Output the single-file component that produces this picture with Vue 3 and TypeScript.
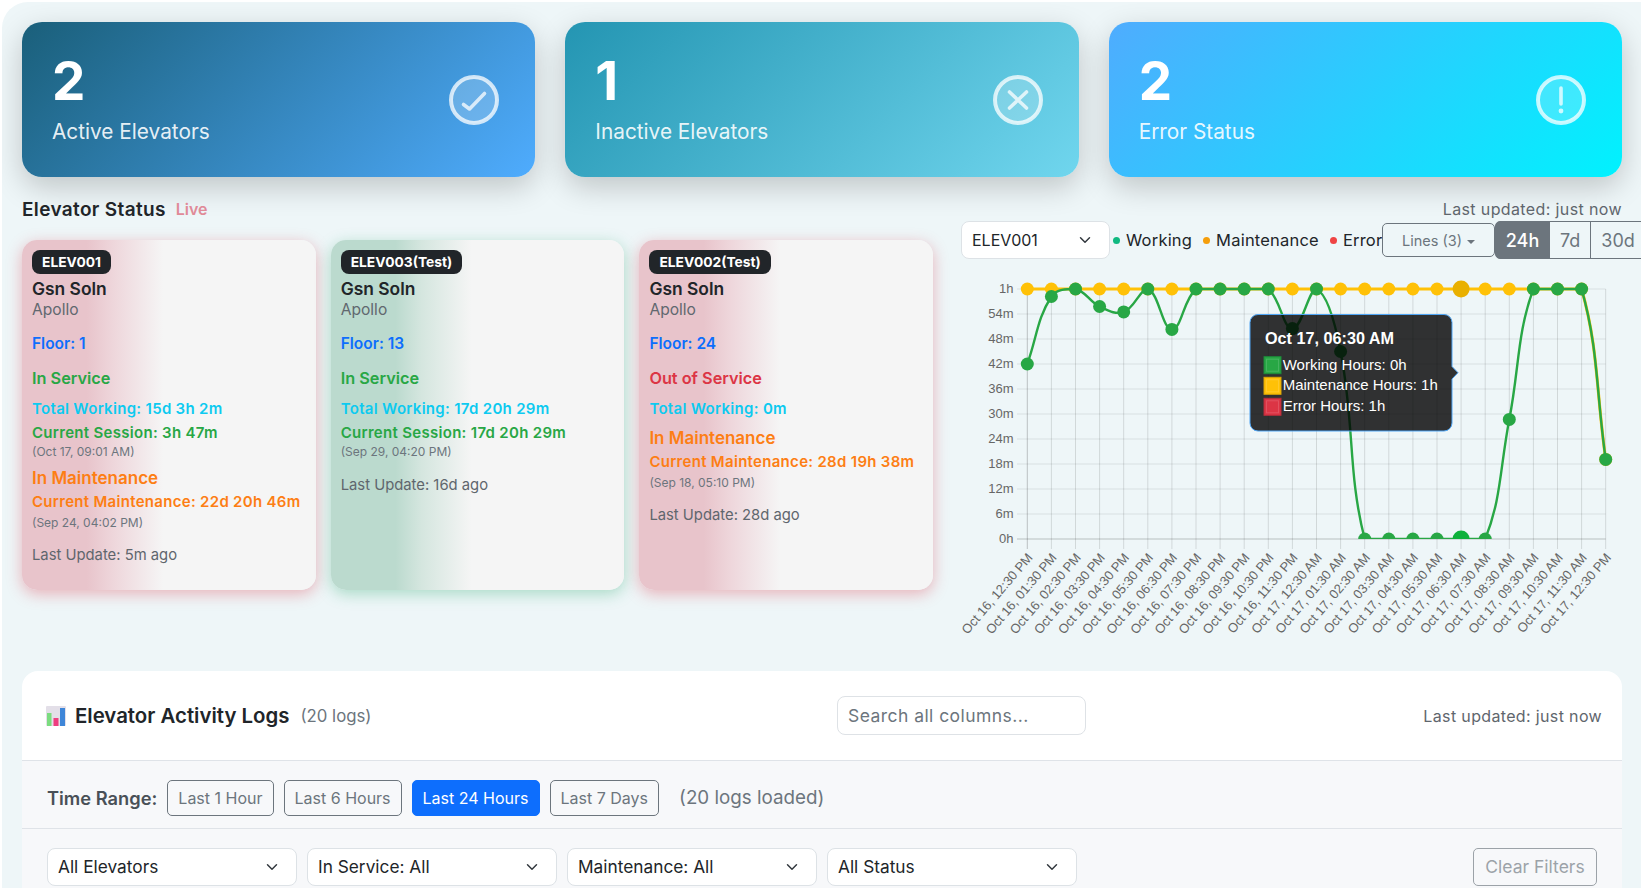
<template>
  <div class="page">
    <section class="stat-row">
      <div v-for="stat in stats" :key="stat.label" class="stat-card" :class="stat.tone">
        <div>
          <div class="stat-value">{{ stat.value }}</div>
          <div class="stat-label">{{ stat.label }}</div>
        </div>
        <svg class="stat-icon" viewBox="0 0 50 50" width="50" height="50">
          <circle cx="25" cy="25" r="23" class="ring" />
          <path v-if="stat.tone === 'active'" d="M14.5 29.5 L20.5 34 L35.5 18.5" class="glyph" />
          <path v-else-if="stat.tone === 'inactive'" d="M16.5 17 L33.5 33 M33.5 17 L16.5 33" class="glyph" />
          <template v-else>
            <path d="M25 13 L25 29" class="glyph" />
            <circle cx="25" cy="36" r="2.4" class="dot" />
          </template>
        </svg>
      </div>
    </section>

    <section class="status-row">
      <div>
        <div class="status-head">
          <h2>Elevator Status</h2>
          <span class="live">Live</span>
        </div>
        <div class="elevators">
          <article v-for="lift in lifts" :key="lift.id" class="lift" :class="lift.tone">
            <span class="badge">{{ lift.id }}</span>
            <div class="name">Gsn Soln</div>
            <div class="site">Apollo</div>
            <div class="floor">Floor: {{ lift.floor }}</div>
            <div class="service" :class="lift.inService ? 'green' : 'red'">
              {{ lift.inService ? 'In Service' : 'Out of Service' }}
            </div>
            <div class="metric total">Total Working: {{ lift.total }}</div>
            <template v-if="lift.session">
              <div class="metric session green">Current Session: {{ lift.session }}</div>
              <div class="since">({{ lift.sessionSince }})</div>
            </template>
            <template v-if="lift.maintenance">
              <div class="maint">In Maintenance</div>
              <div class="metric session orange">Current Maintenance: {{ lift.maintenance }}</div>
              <div class="since">({{ lift.maintenanceSince }})</div>
            </template>
            <div class="update">Last Update: {{ lift.update }}</div>
          </article>
        </div>
      </div>

      <div class="chart-col">
        <div class="chart-updated">Last updated: just now</div>
        <div class="chart-controls">
          <select class="form-select lift-select">
            <option>ELEV001</option>
          </select>
          <div class="legend">
            <span class="legend-item"><i class="w"></i>Working</span>
            <span class="legend-item"><i class="m"></i>Maintenance</span>
            <span class="legend-item"><i class="e"></i>Error</span>
          </div>
          <button class="lines-btn">Lines (3)<span class="caret"></span></button>
          <div class="range-group">
            <button class="on">24h</button>
            <button>7d</button>
            <button>30d</button>
          </div>
        </div>

        <svg class="chart" width="661" height="382" viewBox="0 0 661 382">
          <defs>
            <clipPath id="plot-clip">
              <rect x="0" y="0" width="661" height="277" />
            </clipPath>
          </defs>
          <line
            v-for="(x, i) in xs"
            :key="'v' + i"
            :x1="x" :x2="x" y1="27" y2="287"
            :class="i === 0 ? 'axis' : 'grid-v'"
          />
          <line
            v-for="tick in yTicks"
            :key="tick.label"
            x1="56" :x2="xs[24]" :y1="tick.y" :y2="tick.y"
            :class="tick.label === '0h' ? 'axis' : 'grid-h'"
          />
          <text v-for="tick in yTicks" :key="'t' + tick.label" x="52.5" :y="tick.y + 4" class="tick" text-anchor="end">{{ tick.label }}</text>
          <text
            v-for="(label, i) in xLabels"
            :key="label"
            class="tick"
            text-anchor="end"
            :transform="`translate(${xs[i] + 6} 296) rotate(-49.5)`"
          >{{ label }}</text>

          <g clip-path="url(#plot-clip)">
            <path :d="yellowPath" class="line yellow" />
            <circle v-for="(p, i) in yellowPts" :key="'y' + i" :cx="p.x" :cy="p.y" r="6.5" fill="#ffc107" />
            <circle :cx="xs[18]" cy="27" r="8.5" fill="#e9b000" />
            <path :d="greenPath" class="line green-line" />
            <circle v-for="(p, i) in greenPts" :key="'g' + i" :cx="p.x" :cy="p.y" r="6.5" fill="#28a745" />
            <circle :cx="xs[18]" cy="277" r="8.5" fill="#0db13b" />
          </g>

          <path
            class="tip"
            d="M297 52.5 H483 a8 8 0 0 1 8 8 V104.5 L497 110.7 L491 117 V161 a8 8 0 0 1 -8 8 H297 a8 8 0 0 1 -8 -8 V60.5 a8 8 0 0 1 8 -8 Z"
          />
          <text x="304" y="82" class="tip-title">Oct 17, 06:30 AM</text>
          <g v-for="row in tipRows" :key="row.text">
            <rect x="303" :y="row.y" width="17" height="17" :fill="row.color" :stroke="row.edge" />
            <rect x="305.5" :y="row.y + 2.5" width="12" height="12" fill="none" stroke="rgba(255,255,255,0.14)" />
            <text x="321.7" :y="row.y + 13" class="tip-text">{{ row.text }}</text>
          </g>
        </svg>
      </div>
    </section>

    <section class="logs">
      <header class="logs-head">
        <div class="logs-title">
          <svg width="20" height="20" viewBox="0 0 20 20">
            <rect width="20" height="20" rx="1" fill="#e3dfe8" />
            <rect x="1" y="7" width="4.5" height="13" fill="#7bdc7f" />
            <rect x="7.5" y="12" width="5" height="8" fill="#ee3d7f" />
            <rect x="14" y="2" width="5" height="18" fill="#3e86d8" />
          </svg>
          <h3>Elevator Activity Logs</h3>
          <span class="log-count">(20 logs)</span>
        </div>
        <input class="search" placeholder="Search all columns..." />
        <span class="logs-updated">Last updated: just now</span>
      </header>
      <div class="time-row">
        <strong>Time Range:</strong>
        <button v-for="r in ranges" :key="r" class="range-btn" :class="{ active: r === 'Last 24 Hours' }">{{ r }}</button>
        <span class="loaded">(20 logs loaded)</span>
      </div>
      <div class="filter-row">
        <select v-for="f in filters" :key="f" class="form-select filter">
          <option>{{ f }}</option>
        </select>
        <button class="clear-btn" disabled>Clear Filters</button>
      </div>
    </section>
  </div>
</template>

<script setup lang="ts">
interface Point {
  x: number
  y: number
}

const stats = [
  { value: 2, label: 'Active Elevators', tone: 'active' },
  { value: 1, label: 'Inactive Elevators', tone: 'inactive' },
  { value: 2, label: 'Error Status', tone: 'error' },
]

const lifts = [
  {
    id: 'ELEV001', floor: 1, tone: 'pink', inService: true, total: '15d 3h 2m',
    session: '3h 47m', sessionSince: 'Oct 17, 09:01 AM',
    maintenance: '22d 20h 46m', maintenanceSince: 'Sep 24, 04:02 PM', update: '5m ago',
  },
  {
    id: 'ELEV003(Test)', floor: 13, tone: 'mint', inService: true, total: '17d 20h 29m',
    session: '17d 20h 29m', sessionSince: 'Sep 29, 04:20 PM',
    maintenance: '', maintenanceSince: '', update: '16d ago',
  },
  {
    id: 'ELEV002(Test)', floor: 24, tone: 'pink', inService: false, total: '0m',
    session: '', sessionSince: '',
    maintenance: '28d 19h 38m', maintenanceSince: 'Sep 18, 05:10 PM', update: '28d ago',
  },
]

const ranges = ['Last 1 Hour', 'Last 6 Hours', 'Last 24 Hours', 'Last 7 Days']
const filters = ['All Elevators', 'In Service: All', 'Maintenance: All', 'All Status']

const top = 27
const bottom = 277
const xs = Array.from({ length: 25 }, (_, i) => 66.3 + i * 24.1)
const toY = (minutes: number) => bottom - (minutes / 60) * (bottom - top)

const yTicks = ['0h', '6m', '12m', '18m', '24m', '30m', '36m', '42m', '48m', '54m', '1h'].map((label, i) => ({
  label,
  y: toY(i * 6),
}))

const xLabels = xs.map((_, i) => {
  const h24 = (12 + i) % 24
  const h12 = h24 % 12 === 0 ? 12 : h24 % 12
  const day = i >= 12 ? 17 : 16
  return `Oct ${day}, ${String(h12).padStart(2, '0')}:30 ${h24 < 12 ? 'AM' : 'PM'}`
})

const working = [42, 58.2, 60, 55.8, 54.5, 60, 50.3, 60, 60, 60, 60, 50.5, 60, 45, 0, 0, 0, 0, 0, 0, 28.7, 60, 60, 60, 19.1]
const maintenance = working.map((_, i) => (i === 24 ? 19.1 : 60))

const greenPts: Point[] = working.map((v, i) => ({ x: xs[i], y: toY(v) }))
const yellowPts: Point[] = maintenance.map((v, i) => ({ x: xs[i], y: toY(v) }))

// same bezier chart.js draws with tension 0.4
function spline(pts: Point[], tension = 0.4): string {
  const clampY = (y: number) => Math.min(bottom, Math.max(top, y))
  const clampX = (x: number) => Math.min(xs[24], Math.max(xs[0], x))
  const ctrl = pts.map((cur, i) => {
    const prev = pts[Math.max(0, i - 1)]
    const next = pts[Math.min(pts.length - 1, i + 1)]
    const d01 = Math.hypot(cur.x - prev.x, cur.y - prev.y)
    const d12 = Math.hypot(next.x - cur.x, next.y - cur.y)
    const total = d01 + d12 || 1
    const fa = (tension * d01) / total
    const fb = (tension * d12) / total
    return {
      before: { x: clampX(cur.x - fa * (next.x - prev.x)), y: clampY(cur.y - fa * (next.y - prev.y)) },
      after: { x: clampX(cur.x + fb * (next.x - prev.x)), y: clampY(cur.y + fb * (next.y - prev.y)) },
    }
  })
  let d = `M${pts[0].x} ${pts[0].y}`
  for (let i = 1; i < pts.length; i++) {
    const a = ctrl[i - 1].after
    const b = ctrl[i].before
    d += ` C${a.x} ${a.y} ${b.x} ${b.y} ${pts[i].x} ${pts[i].y}`
  }
  return d
}

const greenPath = spline(greenPts)
const yellowPath = spline(yellowPts)

const tipRows = [
  { text: 'Working Hours: 0h', color: '#28a745', edge: '#1d8a3a', y: 94.7 },
  { text: 'Maintenance Hours: 1h', color: '#ffc107', edge: '#d9a406', y: 115.3 },
  { text: 'Error Hours: 1h', color: '#dc3545', edge: '#b52c3a', y: 136.3 },
]
</script>

<style scoped>
.page {
  box-sizing: border-box;
  margin: 2px 0 0 2px;
  width: 1639px;
  height: 886px;
  padding: 20px 19px 0 20px;
  background: #eef6f8;
  border-top-left-radius: 26px;
  overflow: hidden;
  font-family: Inter, "Open Sans", sans-serif;
  color: #212529;
}

.stat-row {
  display: grid;
  grid-template-columns: repeat(3, 1fr);
  gap: 30px;
  width: 1600px;
}

.stat-card {
  display: flex;
  align-items: center;
  justify-content: space-between;
  height: 155px;
  box-sizing: border-box;
  padding: 0 36px 0 30px;
  border-radius: 20px;
  color: #fff;
  box-shadow: 0 10px 30px rgba(0, 0, 0, 0.2);
}

.stat-card.active {
  background: linear-gradient(135deg, #1a5f7a, #4facfe);
}

.stat-card.inactive {
  background: linear-gradient(135deg, #2495b2, #70d6ee);
}

.stat-card.error {
  background: linear-gradient(135deg, #4facfe, #00f2fe);
}

.stat-value {
  padding-top: 1px;
  font-size: 53px;
  font-weight: 700;
  line-height: 56px;
}

.stat-label {
  margin-top: 8px;
  font-size: 20.8px;
  line-height: 30px;
  color: rgba(255, 255, 255, 0.9);
}

.stat-icon .ring {
  fill: rgba(255, 255, 255, 0.2);
  stroke: rgba(255, 255, 255, 0.75);
  stroke-width: 4;
}

.stat-icon .glyph {
  fill: none;
  stroke: rgba(255, 255, 255, 0.75);
  stroke-width: 3.6;
  stroke-linecap: round;
  stroke-linejoin: round;
}

.stat-icon .dot {
  fill: rgba(255, 255, 255, 0.75);
}

.status-row {
  display: grid;
  grid-template-columns: 912px 661px;
  gap: 27px;
  width: 1600px;
  margin-top: 20px;
}

.status-head {
  display: flex;
  align-items: center;
  gap: 10px;
  height: 24px;
  margin-bottom: 19px;
}

.status-head h2 {
  margin: 0;
  font-size: 19px;
  font-weight: 600;
  letter-spacing: 0.35px;
}

.live {
  font-size: 16px;
  font-weight: 600;
  color: #e08a98;
}

.elevators {
  display: flex;
  gap: 15px;
}

.lift {
  box-sizing: border-box;
  width: 293.7px;
  height: 350px;
  padding: 10px;
  border-radius: 15px;
  font-size: 15px;
  line-height: 20px;
}

.lift.pink {
  background: linear-gradient(90deg, #e8c4cb 0%, #e8c4cb 22%, #eed6db 31%, #f5f5f5 48%);
  box-shadow: 0 4px 15px rgba(220, 53, 69, 0.35);
}

.lift.mint {
  background: linear-gradient(90deg, #bbdace 0%, #bbdace 22%, #d5e6df 31%, #f5f5f5 48%);
  box-shadow: 0 4px 15px rgba(40, 167, 107, 0.35);
}

.badge {
  display: inline-block;
  height: 24px;
  padding: 0 10px;
  border-radius: 8px;
  background: #212529;
  color: #fff;
  font-size: 13.8px;
  font-weight: 700;
  line-height: 24px;
}

.name {
  margin-top: 4px;
  font-size: 17.4px;
  font-weight: 600;
  line-height: 22px;
}

.site {
  font-size: 15.6px;
  color: #61686f;
}

.floor {
  margin-top: 14px;
  font-size: 15.5px;
  font-weight: 600;
  color: #0d6efd;
}

.service {
  margin-top: 14px;
  font-size: 16.3px;
  font-weight: 600;
}

.metric {
  font-weight: 600;
  letter-spacing: 0.3px;
}

.total {
  margin-top: 11px;
  color: #0dcaf0;
}

.session {
  margin-top: 4px;
}

.green {
  color: #28a745;
}

.red {
  color: #dc3545;
}

.orange {
  color: #fd7e14;
}

.since {
  font-size: 12px;
  line-height: 18px;
  color: #6c757d;
}

.orange + .since {
  margin: 2px 0 -1px;
}

.maint {
  margin-top: 7px;
  font-size: 17px;
  font-weight: 600;
  color: #fd7e14;
}

.total + .maint {
  margin-top: 9px;
}

.update {
  margin-top: 14px;
  font-size: 14.8px;
  color: #5f666d;
}

.chart-col {
  min-width: 0;
}

.chart-updated {
  height: 24px;
  font-size: 16px;
  line-height: 24px;
  letter-spacing: 0.38px;
  text-align: right;
  color: #5f666d;
}

.chart-controls {
  display: flex;
  align-items: center;
  height: 38px;
  margin-bottom: 3px;
}

.form-select {
  appearance: none;
  box-sizing: border-box;
  height: 37.5px;
  padding: 0 36px 0 10px;
  border: 1px solid #dde2e6;
  border-radius: 8px;
  background: #fff url("data:image/svg+xml,%3csvg xmlns='http://www.w3.org/2000/svg' viewBox='0 0 16 16'%3e%3cpath fill='none' stroke='%23343a40' stroke-linecap='round' stroke-linejoin='round' stroke-width='2' d='m2 5 6 6 6-6'/%3e%3c/svg%3e") no-repeat right 16px center / 16px 12px;
  font-family: inherit;
  font-size: 16px;
  color: #212529;
}

.lift-select {
  flex: 0 0 149px;
}

.legend {
  flex: 0 0 272px;
  display: flex;
  gap: 11px;
  padding-left: 3px;
  box-sizing: border-box;
  overflow: hidden;
  white-space: nowrap;
  font-size: 16.5px;
  letter-spacing: 0.2px;
}

.legend-item {
  display: inline-flex;
  align-items: center;
  gap: 6px;
}

.legend-item i {
  flex: none;
  width: 7px;
  height: 7px;
  border-radius: 50%;
}

.legend-item .w {
  background: #10b981;
}

.legend-item .m {
  background: #f59e0b;
}

.legend-item .e {
  background: #ef4444;
}

.lines-btn {
  flex: 0 0 113px;
  height: 34px;
  border: 1px solid #6c757d;
  border-radius: 5px;
  background: transparent;
  font-family: inherit;
  font-size: 14.5px;
  color: #6c757d;
}

.caret {
  display: inline-block;
  margin-left: 5px;
  vertical-align: 2px;
  border-top: 4px solid #6c757d;
  border-left: 4px solid transparent;
  border-right: 4px solid transparent;
}

.range-group {
  display: flex;
  flex: none;
  height: 38px;
}

.range-group button {
  margin-left: -1px;
  border: 1px solid #6c757d;
  background: transparent;
  padding: 0 10px;
  font-family: inherit;
  font-size: 18px;
  color: #6c757d;
}

.range-group .on {
  width: 55px;
  padding: 0;
  margin-left: 0;
  border-radius: 5px 0 0 5px;
  background: #6c757d;
  color: #fff;
  font-weight: 500;
}

.chart {
  display: block;
  overflow: visible;
}

.chart line {
  stroke-width: 1;
}

.axis {
  stroke: rgba(0, 0, 0, 0.22);
}

.grid-v {
  stroke: rgba(0, 0, 0, 0.12);
}

.grid-h {
  stroke: rgba(0, 0, 0, 0.09);
}

.tick {
  font-family: "Liberation Sans", Arial, sans-serif;
  font-size: 13px;
  fill: #666;
}

.line {
  fill: none;
}

.yellow {
  stroke: #ffc107;
  stroke-width: 3;
}

.green-line {
  stroke: #28a745;
  stroke-width: 2.4;
}

.tip {
  fill: rgba(0, 0, 0, 0.8);
  stroke: #4ea5f5;
  stroke-width: 1;
}

.tip-title {
  font-family: "Liberation Sans", Arial, sans-serif;
  font-size: 16.2px;
  font-weight: 700;
  fill: #fff;
}

.tip-text {
  font-family: "Liberation Sans", Arial, sans-serif;
  font-size: 15px;
  fill: #fff;
}

.logs {
  width: 1600px;
  margin-top: 27px;
  border-radius: 16px 16px 0 0;
  background: #fff;
}

.logs-head {
  display: grid;
  grid-template-columns: 815px 249px 1fr;
  align-items: center;
  height: 90px;
  padding: 0 20px 0 0;
  box-sizing: border-box;
  border-bottom: 1px solid #dfe3e8;
}

.logs-title {
  display: flex;
  align-items: center;
  padding-left: 24px;
}

.logs-title h3 {
  margin: 0 11px 0 9px;
  font-size: 20.4px;
  font-weight: 600;
}

.log-count {
  font-size: 16.8px;
  color: #6c757d;
}

.search {
  box-sizing: border-box;
  height: 38.5px;
  padding: 0 10px;
  border: 1px solid #dee2e6;
  border-radius: 8px;
  font-family: inherit;
  font-size: 17.5px;
  letter-spacing: 0.45px;
}

.search::placeholder {
  color: #6c757d;
  opacity: 1;
}

.logs-updated {
  font-size: 16px;
  letter-spacing: 0.35px;
  text-align: right;
  color: #5f666d;
}

.time-row {
  display: flex;
  align-items: center;
  box-sizing: border-box;
  height: 68px;
  padding: 6px 25px 0;
  border-bottom: 1px solid #dfe3e8;
  background: #f7f8fa;
}

.time-row strong {
  margin-right: 10px;
  font-size: 18.3px;
  font-weight: 600;
  color: #495057;
}

.range-btn {
  box-sizing: border-box;
  height: 36px;
  margin-right: 10px;
  padding: 0 10px;
  border: 1px solid #6c757d;
  border-radius: 5px;
  background: transparent;
  font-family: inherit;
  font-size: 16px;
  color: #6c757d;
}

.range-btn.active {
  border-color: #0d6efd;
  background: #0d6efd;
  color: #fff;
}

.loaded {
  margin-left: 10px;
  font-size: 18.8px;
  color: #6c757d;
}

.filter-row {
  display: flex;
  align-items: flex-start;
  gap: 10px;
  height: 60px;
  padding: 19px 25px 0;
  background: #f7f8fa;
}

.filter {
  width: 250px;
  font-size: 17.3px;
}

.clear-btn {
  box-sizing: border-box;
  width: 124px;
  height: 37.5px;
  margin-left: auto;
  border: 1px solid #6c757d;
  border-radius: 5px;
  background: transparent;
  font-family: inherit;
  font-size: 17.5px;
  color: #6c757d;
  opacity: 0.65;
}
</style>

<style>
html,
body {
  margin: 0;
  overflow: hidden;
  background: #fff;
}
</style>
